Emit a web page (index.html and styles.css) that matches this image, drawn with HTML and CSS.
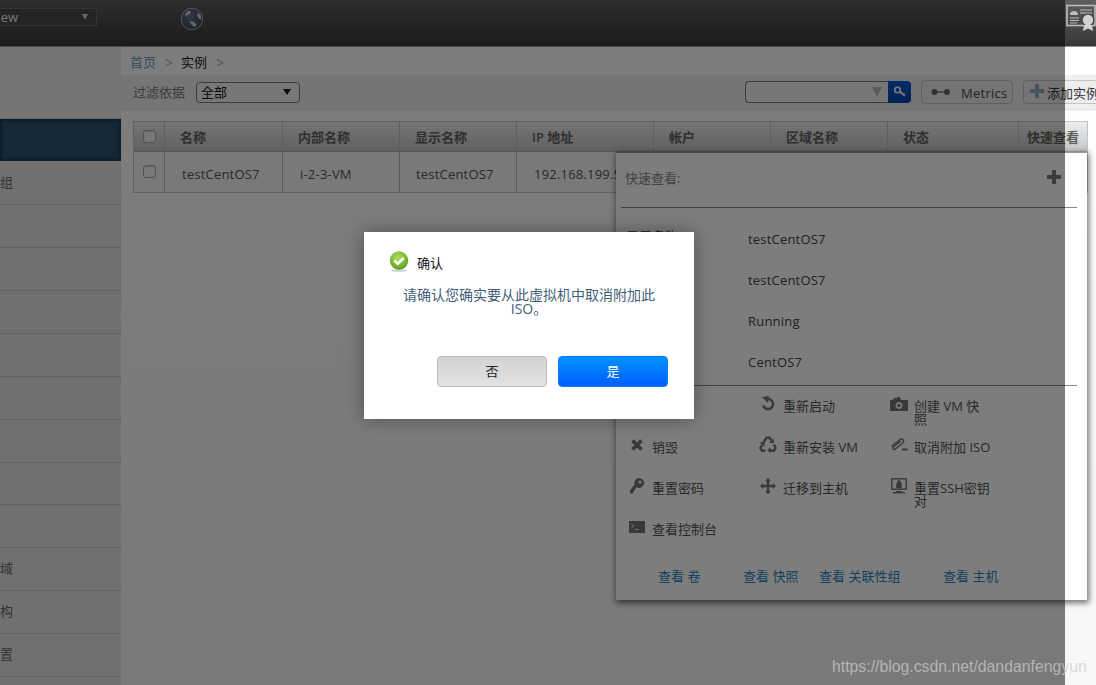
FILE: index.html
```html
<!DOCTYPE html>
<html lang="zh-CN">
<head>
<meta charset="utf-8">
<title>实例</title>
<link rel="stylesheet" href="styles.css">
</head>
<body>
<div class="app">
  <header class="topbar">
    <div class="project"><span>Default View</span><i class="tri-light"></i></div>
    <svg class="globe" viewBox="0 0 24 24" width="24" height="24">
      <defs><radialGradient id="gl" cx=".4" cy=".35" r=".7"><stop offset="0" stop-color="#66738a"/><stop offset="1" stop-color="#36404f"/></radialGradient></defs>
      <circle cx="12" cy="12" r="10.700" fill="url(#gl)" stroke="#a9b0ba" stroke-width="1"/>
      <path d="M5 7l3-3 3 0-1 3-3 1-1 2zM9 14l5 1 3 3-3 2-3-3zM18 5l3 4 0 4-2-1-2-4z" fill="#cfd3d8"/>
    </svg>
    <svg class="cert" viewBox="0 0 30 27" width="30" height="27">
      <rect x="1" y="1.500" width="28" height="20" fill="none" stroke="#bdbdbd" stroke-width="1.600"/>
      <path d="M4 11a4 4 0 0 1 8 0z" fill="#bdbdbd"/>
      <path d="M14 6h12M14 9h12M4 14h9M4 16.500h9M4 19h7" stroke="#bdbdbd" stroke-width="1"/>
      <circle cx="22" cy="16" r="6.500" fill="#4a4a4a"/>
      <path d="M18 21l-1 6 5-2.500 5 2.500-1-6z" fill="#d2d2d2"/>
      <circle cx="22" cy="16" r="5.200" fill="#d2d2d2"/>
    </svg>
  </header>
  <div class="layout">
    <nav class="sidebar">
      <div class="nav-top"></div>
      <div class="nav-item active"></div>
      <div class="nav-item tall"><span class="nav-label">关联性组</span></div>
      <div class="nav-item"></div>
      <div class="nav-item"></div>
      <div class="nav-item"></div>
      <div class="nav-item"></div>
      <div class="nav-item"></div>
      <div class="nav-item"></div>
      <div class="nav-item short"></div>
      <div class="nav-item"></div>
      <div class="nav-item"><span class="nav-label">域</span></div>
      <div class="nav-item"><span class="nav-label">基础架构</span></div>
      <div class="nav-item"><span class="nav-label">全局设置</span></div>
    </nav>
    <main class="main">
      <div class="crumbs"><a class="crumb-link">首页</a><span class="sep">&gt;</span><span class="crumb-cur">实例</span><span class="sep">&gt;</span></div>
      <div class="toolbar">
        <span class="filter-label">过滤依据</span>
        <div class="select"><span>全部</span><i class="tri-dark"></i></div>
        <div class="search">
          <div class="search-input"><i class="tri-grey"></i></div>
          <div class="search-btn">
            <svg viewBox="0 0 14 12" width="14" height="12"><circle cx="4.500" cy="4" r="2.800" fill="none" stroke="#fff" stroke-width="1.600"/><path d="M7 6l5 3.500" stroke="#e8e8e8" stroke-width="2.200"/></svg>
          </div>
        </div>
        <div class="tool-btn metrics">
          <svg viewBox="0 0 20 8" width="20" height="8"><circle cx="3.500" cy="4" r="3" fill="#666"/><circle cx="16" cy="4" r="3" fill="#666"/><path d="M6 4h8" stroke="#666" stroke-width="1.200"/></svg>
          <span>Metrics</span>
        </div>
        <div class="tool-btn add">
          <svg viewBox="0 0 14 14" width="14" height="14"><path d="M5 0h4v5h5v4H9v5H5V9H0V5h5z" fill="#8facc9"/></svg>
          <span>添加实例</span>
        </div>
      </div>
      <div class="table">
        <div class="thead">
          <div class="cell"><i class="check"></i></div>
          <div class="cell">名称</div>
          <div class="cell">内部名称</div>
          <div class="cell">显示名称</div>
          <div class="cell">IP 地址</div>
          <div class="cell">帐户</div>
          <div class="cell">区域名称</div>
          <div class="cell">状态</div>
          <div class="cell quick">快速查看</div>
        </div>
        <div class="tbody">
          <div class="cell"><i class="check"></i></div>
          <div class="cell">testCentOS7</div>
          <div class="cell">i-2-3-VM</div>
          <div class="cell tight">testCentOS7</div>
          <div class="cell">192.168.199.5</div>
          <div class="cell"></div>
          <div class="cell"></div>
          <div class="cell"></div>
          <div class="cell"></div>
        </div>
      </div>
    </main>
  </div>

  <aside class="panel">
    <div class="panel-head">
      <span>快速查看:</span>
      <svg viewBox="0 0 14 14" width="14" height="14"><path d="M5 0h4v5h5v4H9v5H5V9H0V5h5z" fill="#7c7c7c"/></svg>
    </div>
    <dl class="fields">
      <div class="field"><dt class="peek">显示名称</dt><dd>testCentOS7</dd></div>
      <div class="field"><dt></dt><dd>testCentOS7</dd></div>
      <div class="field"><dt></dt><dd>Running</dd></div>
      <div class="field"><dt></dt><dd>CentOS7</dd></div>
    </dl>
    <div class="actions">
      <div class="action"></div>
      <div class="action"><span class="ico"><svg viewBox="0 0 16 16" width="16" height="16"><path d="M6 3.500a5 5 0 1 1-2 7.500" fill="none" stroke="#757575" stroke-width="2.600" transform="rotate(20 8 8)"/><path d="M2 1l7-1-1 7z" fill="#757575"/></svg></span><span class="act-label">重新启动</span></div>
      <div class="action"><span class="ico"><svg viewBox="0 0 18 14" width="18" height="14"><path fill-rule="evenodd" d="M0 3h3l1-2h3V0h3l1 3h7v11H0zM9 5a3.500 3.500 0 1 0 .01 0zM9 6.800a1.700 1.700 0 1 1-.01 0z" fill="#757575"/></svg></span><span class="act-label">创建 VM 快<br>照</span></div>

      <div class="action"><span class="ico"><svg viewBox="0 0 14 14" width="14" height="14"><path d="M2.500 2.500l9 9M11.500 2.500l-9 9" stroke="#757575" stroke-width="3.600"/></svg></span><span class="act-label">销毁</span></div>
      <div class="action"><span class="ico"><svg viewBox="0 0 18 17" width="18" height="17"><path d="M4.500 6.500L7.500 1.700H10.500L12.300 4.700M15 8.500L16.600 12 15 14.700H11.500M6.500 14.700H3L1.400 12 3.200 8.800" fill="none" stroke="#757575" stroke-width="2.400"/><path d="M10 6.800L15 7 14.600 2.500zM11.700 11.500V17L8 14.300zM0.500 6.500L5.800 6 5.300 10.500z" fill="#757575"/></svg></span><span class="act-label">重新安装 VM</span></div>
      <div class="action"><span class="ico"><svg viewBox="0 0 18 14" width="18" height="14"><path d="M10.500 3L3.500 9c-1.500 1.500.5 3.500 2 2L13 4.500c2-2-1-4.500-3-3L1.500 8.500" fill="none" stroke="#757575" stroke-width="1.400"/><path d="M12 10.500h5.500v2H12z" fill="#757575"/></svg></span><span class="act-label">取消附加 ISO</span></div>

      <div class="action"><span class="ico"><svg viewBox="0 0 14 16" width="14" height="16"><path fill-rule="evenodd" d="M9 0a5 5 0 1 1-2.500 9.300L2.500 15.500H0v-3l4.500-6A5 5 0 0 1 9 0zM10 2.500a1.500 1.500 0 1 0 .01 0z" fill="#757575"/></svg></span><span class="act-label">重置密码</span></div>
      <div class="action"><span class="ico"><svg viewBox="0 0 16 16" width="16" height="16"><path d="M8 0l3 3H9.200v3.800H13V5l3 3-3 3V9.200H9.200V13H11l-3 3-3-3h1.800V9.200H3V11L0 8l3-3v1.800h3.800V3H5z" fill="#757575"/></svg></span><span class="act-label">迁移到主机</span></div>
      <div class="action"><span class="ico"><svg viewBox="0 0 16 16" width="16" height="16"><rect x=".8" y=".8" width="14.400" height="10.400" fill="none" stroke="#757575" stroke-width="1.400"/><path d="M5 13h6v1h3v1.500H2V14h3z" fill="#757575"/><path d="M5.500 5.500h5V10h-5zM6.500 5.500V4a1.500 1.500 0 0 1 3 0v1.500" fill="#757575" stroke="#757575" stroke-width=".6"/></svg></span><span class="act-label">重置SSH密钥对</span></div>

      <div class="action"><span class="ico"><svg viewBox="0 0 16 12" width="16" height="12"><rect width="16" height="12" fill="#757575"/><path d="M2.500 3l2.500 2-2.500 2M6 8.500h4" fill="none" stroke="#e4e4e4" stroke-width="1"/></svg></span><span class="act-label">查看控制台</span></div>
    </div>
    <div class="links">
      <a>查看 卷</a>
      <a>查看 快照</a>
      <a>查看 关联性组</a>
      <a>查看 主机</a>
    </div>
  </aside>

  <div class="overlay"></div>

  <div class="dialog" role="dialog">
    <div class="dialog-title">
      <svg viewBox="0 0 20 21" width="20" height="21">
        <defs>
          <radialGradient id="ok" cx=".45" cy=".35" r=".7"><stop offset="0" stop-color="#b5dc5e"/><stop offset=".7" stop-color="#6fb32c"/><stop offset="1" stop-color="#47881a"/></radialGradient>
        </defs>
        <ellipse cx="10" cy="19.500" rx="8" ry="1.300" fill="#cfcfcf"/>
        <circle cx="10" cy="9.500" r="9.200" fill="url(#ok)"/>
        <path d="M5.500 9.500l3.200 3.200 6-5.700" fill="none" stroke="#fff" stroke-width="2.600"/>
      </svg>
      <span>确认</span>
    </div>
    <p class="dialog-msg">请确认您确实要从此虚拟机中取消附加此 ISO。</p>
    <div class="dialog-btns">
      <button class="btn no">否</button>
      <button class="btn yes">是</button>
    </div>
  </div>

  <div class="watermark">https://blog.csdn.net/dandanfengyun</div>
</div>
</body>
</html>
```
FILE: styles.css
```css
* { box-sizing: border-box; }
html, body { margin: 0; height: 100%; overflow: hidden; background: #fff; }
body { font: 13px/13px "Open Sans", "Noto Sans CJK SC", sans-serif; color: #54606f; }
.app { position: relative; width: 1096px; height: 685px; overflow: hidden; }

/* top bar */
.topbar { height: 47px; display: flex; align-items: flex-start; background: linear-gradient(#5e5e5e, #383838); border-bottom: 1px solid #8d9ca3; }
.project { width: 161px; height: 18px; margin: 8px 0 0 -64px; padding: 0 5px; display: flex; align-items: center; justify-content: space-between; background: #4a4a4a; border: 1px solid #6a6a6a; color: #f0f0f0; white-space: nowrap; }
.tri-light { width: 0; height: 0; margin-right: 3px; border: 3.500px solid transparent; border-top: 6px solid #d0d0d0; border-bottom: 0; }
.globe { margin: 7px 0 0 83px; }
.cert { margin: 4px 0 0 auto; }

/* layout */
.layout { display: flex; height: 638px; }
.sidebar { width: 121px; flex: none; background: #e6e4e2; }
.nav-top { height: 72px; background: #f0efed; border-bottom: 1px solid #d8d6d4; }
.nav-item { height: 43px; display: flex; align-items: center; padding-bottom: 2px; border-bottom: 1px solid #cdcbc9; }
.nav-item.tall { height: 44px; padding-bottom: 0; }
.nav-item.short { height: 42px; }
.nav-item.active { height: 42px; background: #2c5474; border: 0; box-shadow: inset 0 0 5px #0c1c28; }
.nav-label { width: 13px; display: flex; justify-content: flex-end; white-space: nowrap; color: #6a6a6a; }

.main { flex: 1; min-width: 0; background: linear-gradient(#fff, #f7f7f7); }
.crumbs { height: 28px; padding: 3px 0 0 9px; display: flex; align-items: center; background: #fff; }
.crumb-link { color: #6f9ccc; }
.crumb-cur { color: #222; }
.sep { margin: 0 8px 0 9px; color: #aaa; font-size: 14px; }
.toolbar { height: 34px; padding-left: 12px; display: flex; align-items: center; background: #efefef; box-shadow: 0 1px 2px #ddd; white-space: nowrap; }
.toolbar > * { flex: none; }
.filter-label { color: #777; }
.select { width: 104px; height: 21px; margin-left: 11px; padding: 0 4px; display: flex; align-items: center; justify-content: space-between; background: #f2f2f2; border: 1px solid #7a7a7a; border-radius: 4px; color: #111; }
.tri-dark { width: 0; height: 0; margin-right: 4px; border: 4px solid transparent; border-top: 6px solid #111; border-bottom: 0; }
.search { margin-left: 445px; display: flex; height: 22px; }
.search-input { width: 143px; padding-right: 6px; display: flex; align-items: center; justify-content: flex-end; background: #f2f2f2; border: 1px solid #777; border-right: 0; border-radius: 4px 0 0 4px; }
.tri-grey { width: 0; height: 0; border: 5px solid transparent; border-top: 10px solid #b8b8b8; border-bottom: 0; }
.search-btn { width: 23px; display: flex; align-items: center; justify-content: center; background: linear-gradient(#0a58d8, #0344a8); border-radius: 0 4px 4px 0; }
.tool-btn { height: 24px; display: flex; align-items: center; background: #ededed; border: 1px solid #c4c4c4; border-radius: 4px; color: #4a4a4a; }
.tool-btn span { margin-top: 3px; }
.add svg { margin-top: -3px; }
.metrics { width: 92px; margin-left: 10px; padding-left: 9px; gap: 10px; letter-spacing: .25px; }
.add { width: 90px; margin-left: 10px; padding-left: 6px; gap: 3px; color: #333; }

/* table */
.table { margin: 12px 8px 0 12px; border: 1px solid #c4c4c4; }
.thead, .tbody { display: grid; grid-template-columns: 31px 118px 117px 117px 137px 117px 117px 131px 68px; }
.thead { height: 30px; background: linear-gradient(#eeeeee, #c6c6c6); border-bottom: 1px solid #aaa; font-weight: 600; color: #606060; }
.tbody { height: 40px; background: #f6f6f6; color: #4c5866; letter-spacing: .2px; }
.cell { display: flex; align-items: center; padding-left: 15px; border-right: 1px solid #bdbdbd; white-space: nowrap; overflow: hidden; }
.thead .cell { padding-top: 2px; }
.tbody .cell { padding: 4px 0 0 17px; }
.tbody .cell.tight { padding-left: 16px; }
.thead .cell:first-child, .tbody .cell:first-child { padding-left: 9px; }
.cell:last-child { border-right: 0; }
.thead .quick { padding-left: 8px; overflow: visible; }
.check { width: 13px; height: 13px; margin-top: -2px; background: #f4f4f4; border: 1px solid #aaa; border-radius: 3px; box-shadow: inset 0 1px 1px #ccc; }
.tbody .check { margin-top: -5px; }

/* quick view panel */
.panel { position: absolute; left: 616px; top: 152px; width: 471px; height: 448px; background: #fff; border-top: 1px solid #999; box-shadow: 1px 2px 6px 1px rgba(0,0,0,.55); color: #555; }
.panel-head { height: 55px; margin: 0 10px 0 5px; padding: 0 16px 7px 4px; display: flex; align-items: center; justify-content: space-between; border-bottom: 1px solid #888; color: #888; }
.panel-head span { margin-top: 4px; }
.fields { height: 178px; margin: 0 10px 0 5px; padding-top: 11px; border-bottom: 1px solid #888; }
.field { height: 41px; display: flex; align-items: center; }
.field dt { width: 127px; padding-left: 5px; }
.field dt.peek { margin-top: -6px; }
.field dd { margin: 0; color: #444; letter-spacing: .2px; }
.actions { padding: 13px 0 0 11px; display: grid; grid-template-columns: repeat(3, 131px); grid-auto-rows: 41px; }
.action { display: flex; align-items: flex-start; }
.ico { width: 20px; height: 13px; margin: -2px 5px 0 0; flex: none; display: flex; align-items: center; justify-content: center; }
.act-label { width: 82px; margin-top: 1px; color: #555; }
.links { margin-top: 7px; padding-left: 42px; display: grid; grid-template-columns: 85px 76px 124px auto; color: #2b86bd; }

/* overlay + dialog */
.overlay { position: absolute; left: 0; top: 0; width: 1065px; height: 100%; background: rgba(0,0,0,.51); }
.dialog { position: absolute; left: 364px; top: 232px; width: 330px; height: 187px; background: #fff; box-shadow: 0 0 18px rgba(0,0,0,.35); }
.dialog-title { padding: 19px 0 0 25px; display: flex; align-items: center; gap: 8px; color: #111; }
.dialog-title span { margin-top: 3px; }
.dialog-msg { width: 262px; margin: 16px auto 0; font-size: 14px; line-height: 14px; text-align: center; color: #3f5f75; }
.dialog-btns { margin: 40px 26px 0 0; display: flex; justify-content: flex-end; gap: 11px; }
.btn { width: 110px; height: 31px; padding: 0; font: inherit; border-radius: 4px; }
.no { background: linear-gradient(#d3d3d3, #e2e2e2); border: 1px solid #bcbcbc; color: #222; }
.yes { background: linear-gradient(#0092ff, #005ffc); border: 1px solid #0a78e8; color: #fff; }

.watermark { position: absolute; left: 832px; top: 658px; font: 15.800px/18px "Liberation Sans", sans-serif; color: rgba(205,205,205,.72); white-space: nowrap; }
```
